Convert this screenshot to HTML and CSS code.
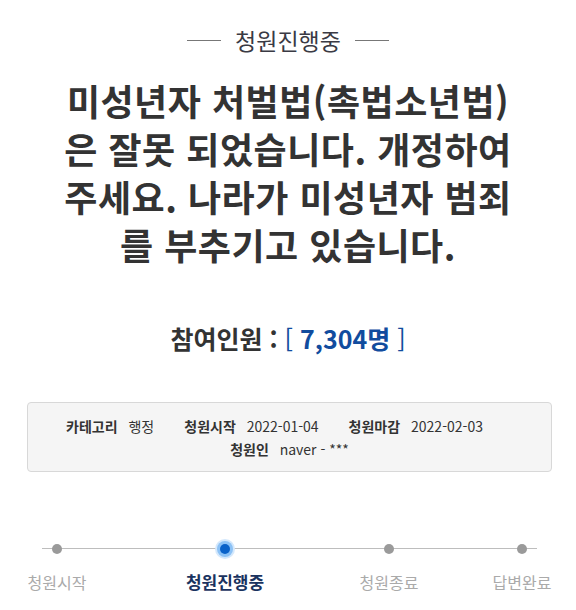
FILE: index.html
```html
<!DOCTYPE html>
<html lang="ko">
<head>
<meta charset="utf-8">
<link rel="stylesheet" href="styles.css">
</head>
<body>
<div class="page">
  <div class="status">
    <span class="status-line"></span>
    <span class="status-text">청원진행중</span>
    <span class="status-line"></span>
  </div>
  <h1 class="title">미성년자 처벌법(촉법소년법)은 잘못 되었습니다. 개정하여 주세요. 나라가 미성년자 범죄를 부추기고 있습니다.</h1>
  <div class="count">참여인원 : <span class="count-num">[ <em>7,304명</em> ]</span></div>
  <div class="info">
    <div class="info-row info-row-main">
      <span class="info-item"><b>카테고리</b> 행정</span>
      <span class="info-item"><b>청원시작</b> 2022-01-04</span>
      <span class="info-item"><b>청원마감</b> 2022-02-03</span>
    </div>
    <div class="info-row">
      <span class="info-item"><b>청원인</b> naver - ***</span>
    </div>
  </div>
  <div class="steps">
    <div class="step step-1"><span class="dot"></span><span class="label">청원시작</span></div>
    <div class="step step-2 active"><span class="dot"></span><span class="label">청원진행중</span></div>
    <div class="step step-3"><span class="dot"></span><span class="label">청원종료</span></div>
    <div class="step step-4"><span class="dot"></span><span class="label">답변완료</span></div>
  </div>
</div>
</body>
</html>
```
FILE: styles.css
```css
html, body {
  margin: 0;
  padding: 0;
  background: #fff;
}
body {
  font-family: "Noto Sans CJK KR", "Noto Sans", sans-serif;
  color: #333;
}
.page {
  width: 576px;
  height: 610px;
  overflow: hidden;
}
.status {
  display: flex;
  align-items: center;
  justify-content: center;
  gap: 14px;
  padding-top: 25px;
  height: 30px;
}
.status-line {
  width: 34px;
  height: 1px;
  background: #777;
}
.status-text {
  font-size: 23px;
  line-height: 30px;
  color: #3a3a44;
}
.title {
  margin: 21px 0 0;
  padding: 0 63px;
  font-size: 36px;
  line-height: 48px;
  font-weight: 700;
  letter-spacing: 0.5px;
  text-align: center;
  color: #333;
}
.count {
  margin-top: 53px;
  text-align: center;
  font-size: 25px;
  line-height: 34px;
  font-weight: 700;
  color: #333;
}
.count-num {
  color: #114c9e;
  font-weight: 400;
}
.count-num em {
  font-style: normal;
  font-weight: 700;
}
.info {
  margin: 47px 24px 0 27px;
  height: 70px;
  box-sizing: border-box;
  background: #f5f5f5;
  border: 1px solid #d8d8d8;
  border-radius: 4px;
  padding-top: 12px;
  font-size: 14px;
  line-height: 23px;
  color: #333;
}
.info-row {
  display: flex;
  justify-content: center;
}
.info-row-main .info-item {
  margin-right: 30px;
}
.info-item b {
  font-weight: 700;
  margin-right: 7px;
}
.steps {
  position: relative;
  display: flex;
  margin-top: 68px;
  padding-left: 27px;
}
.steps::before {
  content: "";
  position: absolute;
  left: 42px;
  width: 495px;
  top: 8px;
  height: 1px;
  background: #bdbdbd;
}
.step {
  display: flex;
  flex-direction: column;
  align-items: center;
  position: relative;
}
.step-1 { width: 60px; }
.step-2 { width: 80px; margin-left: 98px; }
.step-3 { width: 60px; margin-left: 94px; }
.step-4 { width: 64px; margin-left: 71px; }
.dot {
  width: 10px;
  height: 10px;
  border-radius: 50%;
  background: #9a9a9a;
  margin-top: 4px;
}
.active .dot {
  background: #0a62c9;
  box-shadow: 0 0 0 3px #8cc2f6, 0 0 0 5px #d4e8fc;
}
.label {
  margin-top: 17px;
  font-size: 16px;
  line-height: 22px;
  color: #aaa;
  white-space: nowrap;
}
.active .label {
  color: #1a3360;
  font-weight: 700;
  font-size: 17px;
}
```
